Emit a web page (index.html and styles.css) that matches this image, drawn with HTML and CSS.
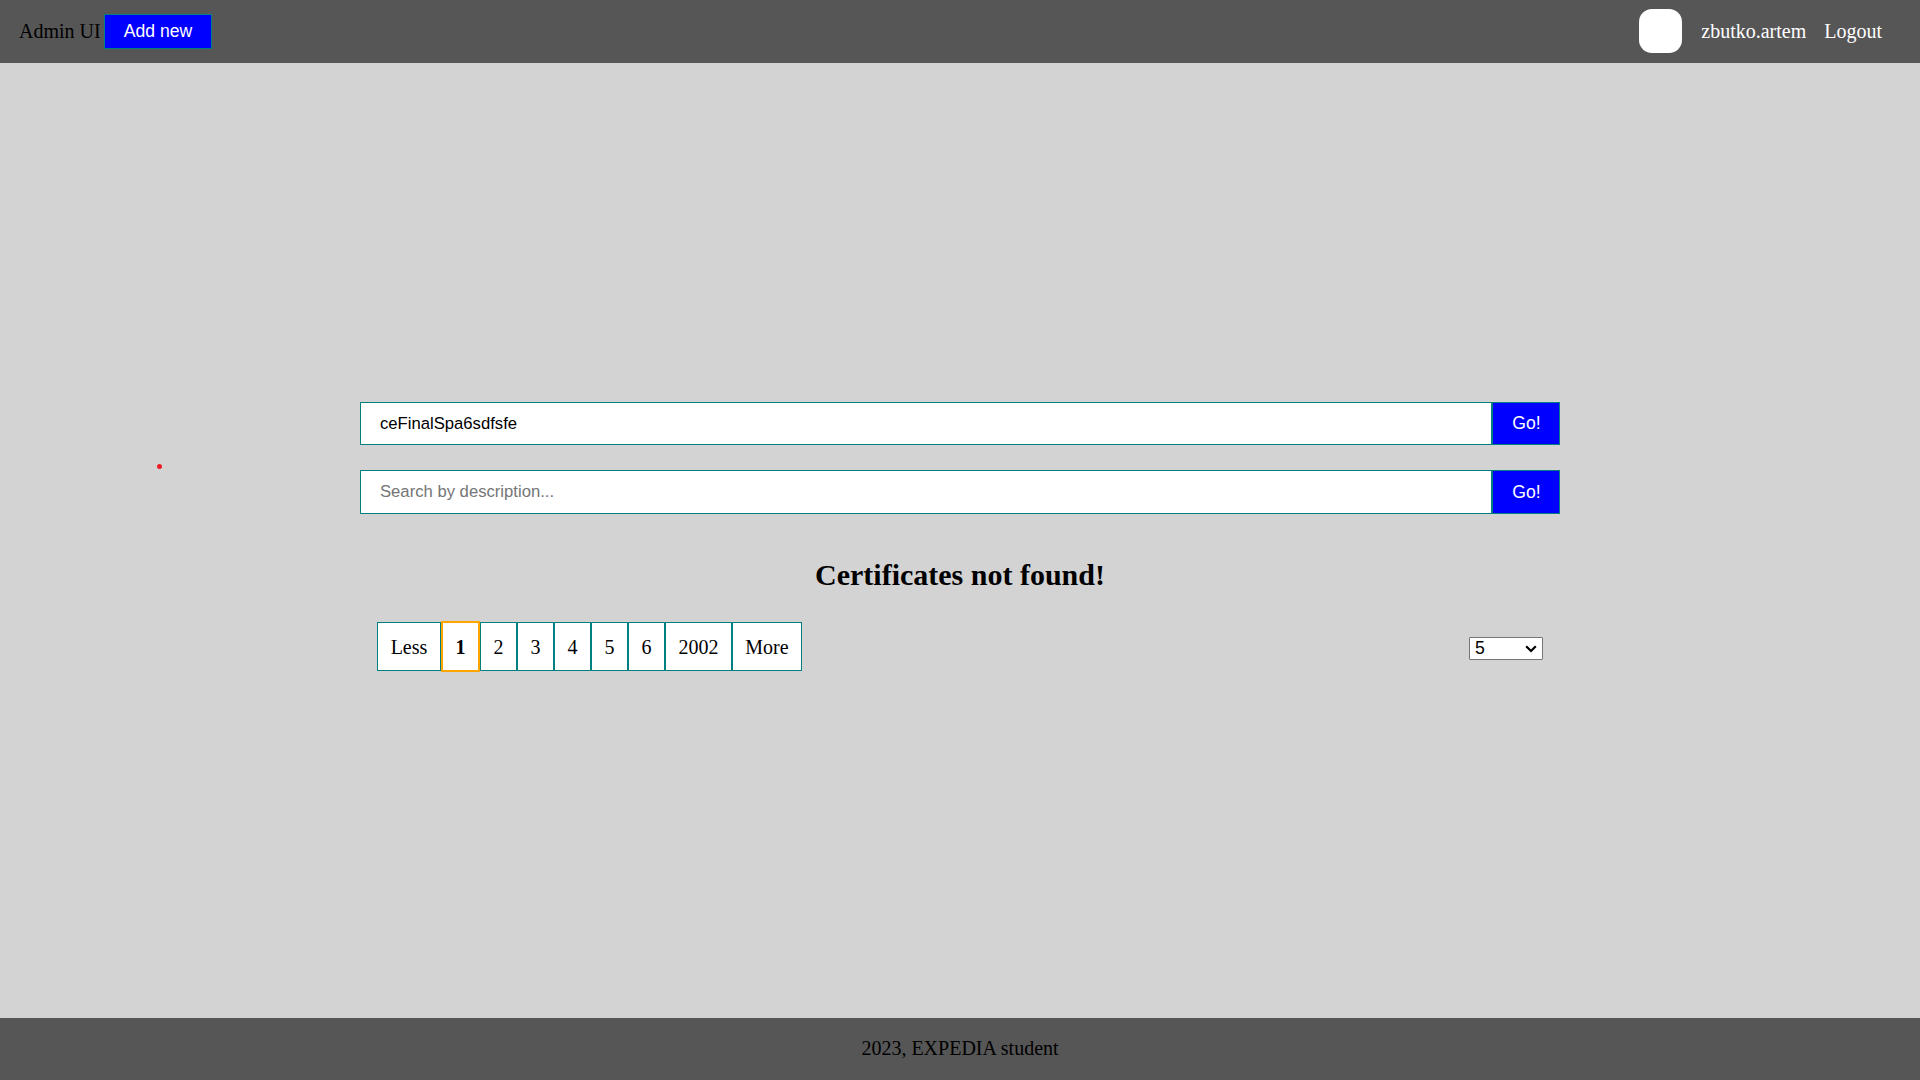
FILE: index.html
```html
<!DOCTYPE html>
<html lang="en">
<head>
<meta charset="utf-8">
<title>Admin UI</title>
<link rel="stylesheet" href="styles.css">
</head>
<body>
<header class="header">
  <div class="brand"><span class="title">Admin UI</span><button class="button add">Add new</button></div>
  <nav class="user"><span class="avatar"></span><span class="name">zbutko.artem</span><span class="logout">Logout</span></nav>
</header>
<main class="main">
  <span class="dot"></span>
  <form class="search"><input class="field" type="text" value="ceFinalSpa6sdfsfe"><button class="button go" type="button">Go!</button></form>
  <form class="search second"><input class="field" type="text" placeholder="Search by description..."><button class="button go" type="button">Go!</button></form>
  <h2 class="message">Certificates not found!</h2>
  <div class="controls">
    <ul class="pages">
      <li class="page less">Less</li><li class="page active">1</li><li class="page">2</li><li class="page">3</li><li class="page">4</li><li class="page">5</li><li class="page">6</li><li class="page last">2002</li><li class="page more">More</li>
    </ul>
    <div class="size">
      <select class="select"><option>5</option><option>10</option><option>20</option></select>
      <svg class="arrow" width="12" height="8" viewBox="0 0 12 8"><path d="M1.2 1.2 6 6l4.8-4.8" fill="none" stroke="#000" stroke-width="2.2"/></svg>
    </div>
  </div>
</main>
<footer class="footer">2023, EXPEDIA student</footer>
</body>
</html>
```
FILE: styles.css
```css
* { box-sizing: border-box; }
body {
  margin: 0;
  height: 100vh;
  display: flex;
  flex-direction: column;
  overflow: hidden;
  background: lightgray;
  color: #000;
  font: 20px/22px "Liberation Serif", "Times New Roman", serif;
}
.header {
  height: 63px;
  flex: none;
  display: flex;
  justify-content: space-between;
  align-items: center;
  padding: 0 37px 0 19px;
  background: #565656;
}
.brand, .user { display: flex; align-items: center; }
.title { width: 85px; white-space: nowrap; }
.title, .name, .logout { padding-bottom: 1px; }
.user { color: #fff; }
.avatar { width: 43px; height: 44px; margin: 0 19px 2px 0; border-radius: 13px; background: #fff; }
.name { margin-right: 18px; }
.logout { margin-right: 1px; }
.button {
  border: 1px solid teal;
  background: blue;
  color: #fff;
  padding: 0;
  font: 17.6px "Liberation Sans", Arial, sans-serif;
}
.add { width: 108px; height: 35px; }
.main {
  position: relative;
  flex: 1;
  width: 1200px;
  margin: 0 auto;
  padding-top: 339px;
}
.dot {
  position: absolute;
  left: -203px;
  top: 401px;
  width: 5px;
  height: 5px;
  border-radius: 50%;
  background: #ed1c24;
}
.search { display: flex; height: 43px; }
.second { height: 44px; margin-top: 25px; }
.field {
  flex: 1;
  border: 1px solid teal;
  background: #fff;
  color: #000;
  padding: 0 19px;
  font: 16.667px "Liberation Sans", Arial, sans-serif;
}
.go { width: 68px; padding-left: 1px; }
.message { margin: 44px 0 0; font-size: 30px; line-height: 33px; text-align: center; }
.controls { display: flex; justify-content: space-between; align-items: center; margin-top: 30px; padding: 0 17px; }
.pages { display: flex; align-items: center; list-style: none; margin: 0; padding: 0; }
.page {
  width: 37px;
  height: 49px;
  display: flex;
  align-items: center;
  justify-content: center;
  border: 1px solid teal;
  background: #fff;
}
.less { width: 64px; }
.active { width: 39px; height: 51px; border: 2px solid orange; font-weight: bold; }
.last { width: 67px; }
.more { width: 70px; }
.size { position: relative; display: flex; margin-top: 4px; }
.select {
  width: 74px;
  height: 23px;
  appearance: none;
  border: 1px solid #767676;
  border-radius: 1px;
  background: #fff;
  color: #000;
  padding: 0 5px;
  font: 17.6px/21px "Liberation Sans", Arial, sans-serif;
}
.arrow { position: absolute; right: 6px; top: 8px; pointer-events: none; }
.footer {
  height: 62px;
  flex: none;
  display: flex;
  align-items: center;
  justify-content: center;
  padding-bottom: 2px;
  background: #565656;
}
```
